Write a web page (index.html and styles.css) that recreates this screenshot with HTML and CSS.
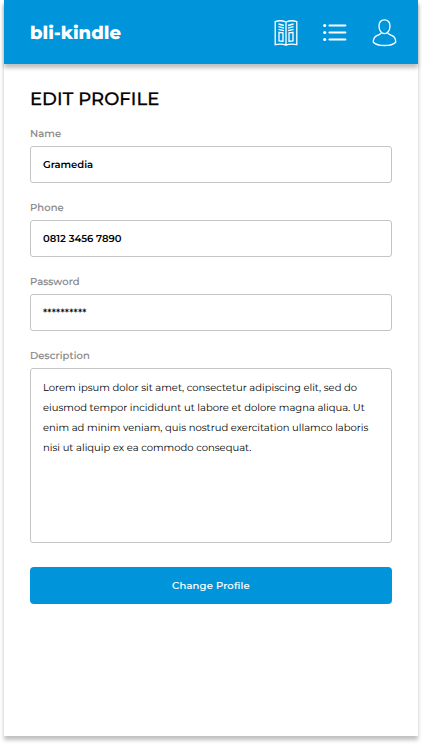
FILE: index.html
```html
<!DOCTYPE html>
<html lang="en">
<head>
<meta charset="utf-8">
<title>bli-kindle</title>
<link rel="stylesheet" href="styles.css">
</head>
<body>
<main class="screen">
  <header class="topbar">
    <div class="brand">bli-kindle</div>
    <nav class="nav">
      <svg class="icon-book" width="24" height="28" viewBox="0 0 24 28" fill="none" stroke="#fff" stroke-width="1.3">
        <path d="M12 3C8.500 1.500 4.500 1.500 1.200 2.600V25.700C5 24.900 9 24.900 12 26.200C15 24.900 19 24.900 22.800 25.700V2.600C19.500 1.500 15.500 1.500 12 3V26"/>
        <path d="M4.500 5L10 6.500M4.500 7.700L10 9.200M4.500 10.300L10 11.600M19.500 5L14 6.500M19.500 7.700L14 9.200M19.500 10.300L14 11.600M5 13.300L9 13.800V22.200L5 21.900ZM19 13.300L15 13.800V22.200L19 21.900Z"/>
      </svg>
      <svg class="icon-list" width="24" height="20" viewBox="0 0 24 20" fill="#fff">
        <circle cx="1.700" cy="2.500" r="1.600"/><circle cx="1.700" cy="9.500" r="1.600"/><circle cx="1.700" cy="16.500" r="1.600"/>
        <path d="M6.500 2.500H22.300M6.500 9.500H22.300M6.500 16.500H22.300" stroke="#fff" stroke-width="2.200" stroke-linecap="round"/>
      </svg>
      <svg class="icon-user" width="25" height="28" viewBox="0 0 25 28" fill="none" stroke="#fff" stroke-width="1.300">
        <path d="M12.500 .8C9 .8 7 3.200 7 7C7 11.200 9.200 14.600 12.500 14.600C15.800 14.600 18 11.200 18 7C18 3.200 16 .8 12.500 .8Z"/>
        <path d="M9.300 13.800C8.200 15.300 6.500 15.900 4.800 16.700C2 18 1.300 20.100 1.300 23.200C3.500 25.500 7.500 26.500 12.500 26.500C17.500 26.500 21.500 25.500 23.700 23.200C23.700 20.100 23 18 20.200 16.700C18.500 15.900 16.800 15.300 15.700 13.800"/>
      </svg>
    </nav>
  </header>
  <form class="form">
    <h1 class="title">EDIT PROFILE</h1>
    <label class="label">Name</label>
    <div class="field">Gramedia</div>
    <label class="label">Phone</label>
    <div class="field">0812 3456 7890</div>
    <label class="label">Password</label>
    <div class="field">**********</div>
    <label class="label">Description</label>
    <div class="field area">Lorem ipsum dolor sit amet, consectetur adipiscing elit, sed do<br>eiusmod tempor incididunt ut labore et dolore magna aliqua. Ut<br>enim ad minim veniam, quis nostrud exercitation ullamco laboris<br>nisi ut aliquip ex ea commodo consequat.</div>
    <button class="submit" type="button">Change Profile</button>
  </form>
</main>
</body>
</html>
```
FILE: styles.css
```css
* { box-sizing: border-box; }
body {
  margin: 0;
  height: 744px;
  background: #fff;
  font-family: Montserrat, Inter, sans-serif;
  text-rendering: geometricPrecision;
  overflow: hidden;
}
.screen {
  width: 414px;
  height: 736px;
  margin: 0 4px;
  background: #fff;
  box-shadow: 0 4px 4px rgba(0, 0, 0, .25);
}
.topbar {
  height: 64px;
  padding: 0 21px 0 26px;
  display: flex;
  align-items: center;
  justify-content: space-between;
  background: #0095da;
  box-shadow: 0 4px 4px rgba(0, 0, 0, .25);
}
.brand {
  padding-top: 2px;
  color: #fff;
  font-size: 18px;
  font-weight: 800;
  line-height: 24px;
  white-space: nowrap;
}
.nav { display: flex; align-items: center; padding-top: 1px; }
.icon-list { margin: 0 25px; }
.form { padding: 23px 26px 0; }
.title {
  margin: 0 0 16px;
  font-size: 18px;
  font-weight: 500;
  line-height: 24px;
  letter-spacing: .05px;
  -webkit-text-stroke: .25px #000;
  color: #000;
}
.label {
  display: block;
  height: 13px;
  margin-bottom: 6px;
  font-size: 10px;
  line-height: 13px;
  font-weight: 500;
  letter-spacing: .1px;
  -webkit-text-stroke: .15px #888;
  color: #888;
}
.field {
  height: 37px;
  margin-bottom: 18px;
  padding: 0 12px;
  border: 1px solid #c4c4c4;
  border-radius: 3px;
  font-size: 10px;
  font-weight: 600;
  line-height: 35px;
  white-space: nowrap;
  color: #000;
}
.area {
  height: 175px;
  margin-bottom: 24px;
  padding-top: 9px;
  font-weight: 400;
  line-height: 20px;
  color: #000;
}
.submit {
  display: block;
  width: 100%;
  height: 37px;
  padding: 0;
  border: 0;
  border-radius: 4px;
  background: #0095da;
  color: #fff;
  font: 500 10px/37px Montserrat, Inter, sans-serif;
  letter-spacing: .2px;
  -webkit-text-stroke: .15px #fff;
}
```
